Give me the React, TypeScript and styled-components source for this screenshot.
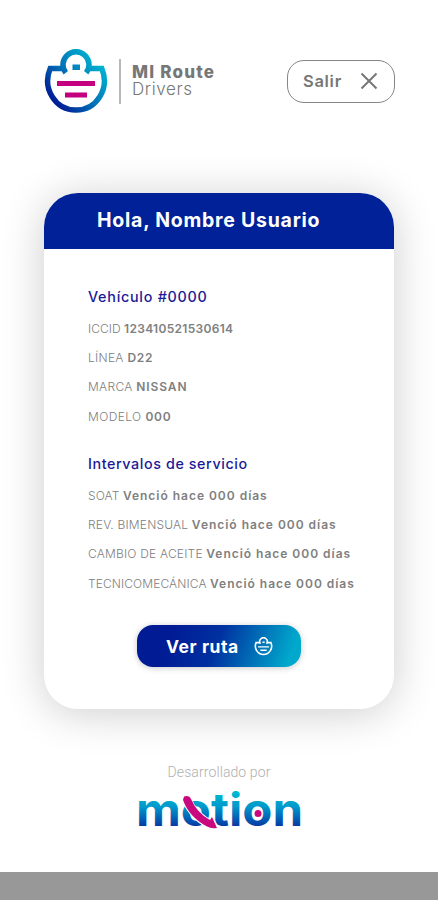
import React from 'react';
import styled, { createGlobalStyle } from 'styled-components';

const Global = createGlobalStyle`
  * { box-sizing: border-box; }
  body { margin: 0; background: #fff; font-family: "Inter", "Liberation Sans", sans-serif; }
`;

const Screen = styled.main`
  width: 438px;
  height: 900px;
  display: flex;
  flex-direction: column;
  background: #fff;
  overflow: hidden;
`;

const TopBar = styled.header`
  display: flex;
  justify-content: space-between;
  align-items: flex-start;
  padding: 49px 43px 0 43px;
  height: 193px;
`;

const Brand = styled.div`
  display: flex;
  align-items: center;
  height: 65px;
`;

const Divider = styled.span`
  width: 2px;
  height: 45px;
  margin: 0 11px 0 10px;
  background: #b9b9b9;
`;

const BrandText = styled.div`
  display: flex;
  flex-direction: column;
  margin-top: -1px;
  color: #777;
  white-space: nowrap;
  font-size: 17px;
  line-height: 17px;
`;

const Fit = styled.span<{ $track?: number; $weight?: number }>`
  letter-spacing: ${(p) => p.$track ?? 0}px;
  font-weight: ${(p) => p.$weight ?? 400};
`;

const ExitButton = styled.button`
  display: flex;
  align-items: center;
  justify-content: space-between;
  width: 108px;
  height: 43px;
  margin-top: 11px;
  padding: 0 16px 1px 15px;
  border: 1.5px solid #858585;
  border-radius: 17px;
  background: #fff;
  color: #777;
  font-family: inherit;
  font-size: 16.5px;
`;

const Card = styled.section`
  width: 350px;
  height: 516px;
  margin: 0 44px;
  flex-shrink: 0;
  border-radius: 34px;
  background: #fff;
  overflow: hidden;
  box-shadow: 0 4px 44px rgba(0, 0, 0, 0.2);
`;

const CardHeader = styled.h1`
  margin: 0;
  height: 55.5px;
  padding-left: 53px;
  background: #002197;
  color: #fff;
  font-size: 19.5px;
  line-height: 54px;
  white-space: nowrap;
`;

const CardBody = styled.div`
  padding: 37px 0 0 44px;
`;

const Group = styled.section`
  height: 167px;
`;

const GroupTitle = styled.h2`
  margin: 0 0 6.5px;
  color: #1a1a97;
  font-size: 14.3px;
  line-height: 22px;
`;

const Row = styled.p`
  margin: 0;
  height: 29.2px;
  line-height: 29px;
  font-size: 12px;
  color: #808080;
  white-space: nowrap;
`;

const RouteButton = styled.button`
  display: flex;
  align-items: center;
  justify-content: space-between;
  width: 164px;
  height: 42px;
  margin: 5.5px 0 0 49px;
  padding: 0 28px 0 29px;
  border: 0;
  border-radius: 16px;
  background: linear-gradient(110deg, #001b94 20%, #0030a0 48%, #00a9cc 92%);
  box-shadow: 0 1px 6px rgba(0, 0, 0, 0.22);
  color: #fff;
  font-family: inherit;
  font-size: 17.5px;
`;

const Credits = styled.footer`
  display: flex;
  flex-direction: column;
  align-items: center;
  height: 163px;
  padding-top: 53px;
  color: #b0b0b0;
  font-family: Roboto, sans-serif;
  font-size: 14px;
  line-height: 20px;
`;

const Wordmark = styled.svg`
  display: block;
  margin-top: 6px;
  overflow: visible;
`;

const BottomStrip = styled.div`
  height: 28px;
  background: #989898;
`;

const RouteMark = ({ size, mono }: { size: number; mono?: boolean }) => {
  const ink = mono ? '#fff' : 'url(#mark)';
  const accent = mono ? '#fff' : '#c4007f';
  return (
    <svg width={size} height={size} viewBox="0 0 66 66" fill="none">
      <defs>
        <linearGradient id="mark" x1="8" y1="54" x2="55" y2="14" gradientUnits="userSpaceOnUse">
          <stop stopColor="#001291" />
          <stop offset=".45" stopColor="#0069b3" />
          <stop offset="1" stopColor="#00b0cf" />
        </linearGradient>
      </defs>
      <path
        d="M20.500 19.500H7.200C-1 39 12 61 33 61S67 39 58.800 19.500H45.500M22.800 23.800A13 13 0 1 1 43.200 23.800"
        stroke={ink}
        strokeWidth="5.500"
      />
      <rect x="29.500" y="15.500" width="7.500" height="5.500" fill={ink} />
      <path d="M14 34.500H52M22 46H44" stroke={accent} strokeWidth="4.800" />
    </svg>
  );
};

const MotionLogo = () => (
  <Wordmark width="166" height="48" viewBox="0 0 166 48">
    <defs>
      <linearGradient id="motion" x1="0" y1="5" x2="0" y2="40" gradientUnits="userSpaceOnUse">
        <stop stopColor="#00b9d1" />
        <stop offset=".4" stopColor="#0098cc" />
        <stop offset="1" stopColor="#0730a0" />
      </linearGradient>
    </defs>
    <text
      x="0"
      y="38"
      textLength="167"
      lengthAdjust="spacingAndGlyphs"
      fill="url(#motion)"
      fontFamily="Inter, sans-serif"
      fontWeight="700"
      fontSize="46"
    >
      motion
    </text>
    <path d="M50 11Q59 30 76 37" fill="none" stroke="#fff" strokeWidth="9.500" strokeLinecap="round" />
    <path
      d="M48 8.500Q53 6.500 55 11Q61 25 74 32L76 29L81 40Q75 41 71 38.500Q53 29 47 12Z"
      fill="#c9087f"
    />
    <circle cx="122" cy="25.500" r="3.500" fill="#c9087f" />
  </Wordmark>
);

const vehicle = [
  { label: 'ICCID', value: '123410521530614', a: 0.05, b: 0.3 },
  { label: 'LÍNEA', value: 'D22', a: 0.3, b: 0.7 },
  { label: 'MARCA', value: 'NISSAN', a: 0.3, b: 0.9 },
  { label: 'MODELO', value: '000', a: 0.4, b: 0.8 },
];

const service = [
  { label: 'SOAT', value: 'Venció hace 000 días', a: 0.1, b: 0.98 },
  { label: 'REV. BIMENSUAL', value: 'Venció hace 000 días', a: 0.2, b: 0.98 },
  { label: 'CAMBIO DE ACEITE', value: 'Venció hace 000 días', a: 0.2, b: 0.98 },
  { label: 'TECNICOMECÁNICA', value: 'Venció hace 000 días', a: 0.1, b: 0.98 },
];

const Rows = ({ items }: { items: typeof vehicle }) => (
  <>
    {items.map((r) => (
      <Row key={r.label}>
        <Fit $weight={300} $track={r.a}>{r.label} </Fit>
        <Fit $weight={600} $track={r.b}>{r.value}</Fit>
      </Row>
    ))}
  </>
);

export default function App() {
  return (
    <Screen>
      <Global />
      <TopBar>
        <Brand>
          <RouteMark size={66} />
          <Divider />
          <BrandText>
            <Fit $weight={800} $track={1.2}>MI Route</Fit>
            <Fit $weight={300} $track={0.6}>Drivers</Fit>
          </BrandText>
        </Brand>
        <ExitButton>
          <Fit $weight={600} $track={0.7}>Salir</Fit>
          <svg width="18" height="18" viewBox="0 0 18 18" stroke="#777" strokeWidth="2">
            <path d="M1.500 1.500 16.500 16.500M16.500 1.500 1.500 16.500" />
          </svg>
        </ExitButton>
      </TopBar>
      <Card>
        <CardHeader><Fit $weight={700} $track={0.75}>Hola, Nombre Usuario</Fit></CardHeader>
        <CardBody>
          <Group>
            <GroupTitle><Fit $weight={500} $track={0.76}>Vehículo #0000</Fit></GroupTitle>
            <Rows items={vehicle} />
          </Group>
          <Group>
            <GroupTitle><Fit $weight={500} $track={0.6}>Intervalos de servicio</Fit></GroupTitle>
            <Rows items={service} />
          </Group>
          <RouteButton>
            <Fit $weight={700} $track={0.55}>Ver ruta</Fit>
            <RouteMark size={19} mono />
          </RouteButton>
        </CardBody>
      </Card>
      <Credits>
        <Fit $weight={300} $track={0.1}>Desarrollado por</Fit>
        <MotionLogo />
      </Credits>
      <BottomStrip />
    </Screen>
  );
}
